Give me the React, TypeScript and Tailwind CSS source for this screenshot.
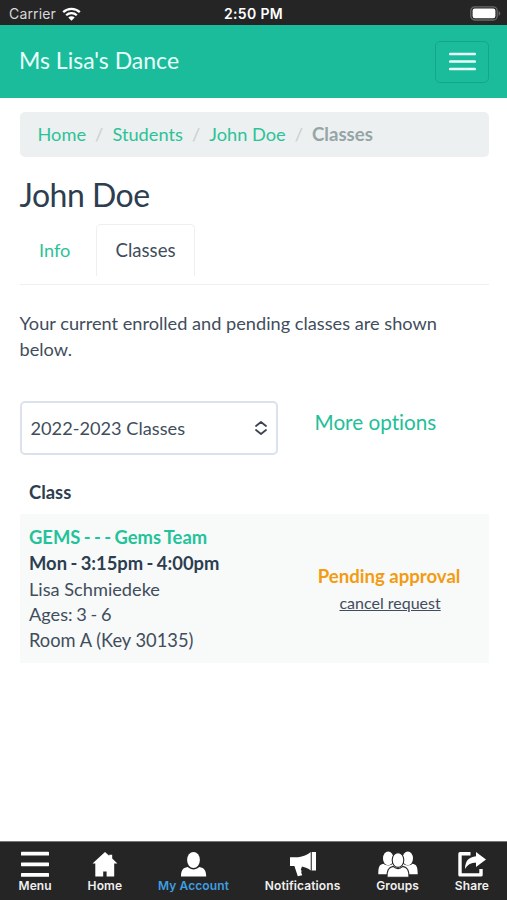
import type { ReactNode } from "react";

const crumbs = ["Home", "Students", "John Doe"];

export default function App() {
  return (
    <main className="flex h-[900px] w-[507px] flex-col overflow-hidden bg-white font-['Lato',sans-serif] text-[18.2px] leading-[25.7px] text-[#414d5c] [font-variant-ligatures:none]">
      <StatusBar />
      <Header />
      <div className="flex flex-1 flex-col pl-[19.5px] pr-[18.5px]">
        <nav className="mt-[14px] flex h-[45px] shrink-0 items-center rounded-[5px] bg-[#ecf0f1] pl-[18px] pt-px">
          {crumbs.map((crumb) => (
            <span key={crumb} className="flex">
              <a className="text-[#2cc297]">{crumb}</a>
              <span className="w-[26.5px] text-center text-[#c9cfd2]">/</span>
            </span>
          ))}
          <span className="text-[18.6px] font-bold text-[#95a5a6]">
            Classes
          </span>
        </nav>

        <h1 className="mt-[18px] text-[32px] leading-[40px] tracking-[-0.5px] text-[#2c3e50]">
          John Doe
        </h1>

        <div className="mt-[9px] flex h-[61px] shrink-0 items-start border-b border-[#ecf0f1]">
          <a className="w-[76.5px] pl-[19.5px] pt-[14px] text-[#2cc297]">
            Info
          </a>
          <a className="h-[52px] w-[99px] rounded-t-[5px] border border-b-0 border-[#ecf0f1] pt-[13px] text-center text-[18.6px]">
            Classes
          </a>
        </div>

        <p className="mt-[26px] w-[440px]">
          Your current enrolled and pending classes are shown below.
        </p>

        <div className="mt-[39px] flex shrink-0">
          <button className="flex h-[54px] w-[258px] items-center justify-between rounded-[5px] border-2 border-[#dce2ec] pl-[9px] pr-[8px]">
            2022-2023 Classes
            <svg
              width="14"
              height="16"
              viewBox="0 0 14 16"
              fill="none"
              stroke="#3a4451"
              strokeWidth="1.8"
              strokeLinecap="round"
              strokeLinejoin="round"
            >
              <path d="M2 6 7 2l5 4M2 10l5 4 5-4" />
            </svg>
          </button>
          <a className="ml-[37px] mt-[9px] text-[20.7px] text-[#22bf98]">
            More options
          </a>
        </div>

        <h2 className="mb-[8px] ml-[9.5px] mt-[25px] text-[18.4px] font-bold text-[#2c3e50]">
          Class
        </h2>
        <section className="flex h-[149px] shrink-0 items-center justify-between bg-[#f8f9f9] pl-[9.5px] pr-[28px]">
          <div className="pt-[2px]">
            <p className="text-[18.4px] font-bold text-[#22c39a] [word-spacing:-1.1px]">
              GEMS - - - Gems Team
            </p>
            <p className="text-[18.4px] font-bold text-[#2c3e50] [word-spacing:-1.1px]">
              Mon - 3:15pm - 4:00pm
            </p>
            <p>Lisa Schmiedeke</p>
            <p className="[word-spacing:-1px]">Ages: 3 - 6</p>
            <p className="text-[18.3px]">Room A (Key 30135)</p>
          </div>
          <div className="pt-[2px] text-center">
            <p className="text-[18.6px] font-bold text-[#f39c12]">
              Pending approval
            </p>
            <p className="pl-[2px] text-[16px]">
              <a className="underline">cancel request</a>
            </p>
          </div>
        </section>
      </div>
      <TabBar />
    </main>
  );
}

function StatusBar() {
  return (
    <div className="grid h-[25px] shrink-0 grid-cols-3 items-center bg-[#252525] pl-[9px] pr-[6px] pt-[2px] font-['Inter',sans-serif] text-[14px] leading-4 text-white">
      <div className="flex items-center gap-[6px]">
        <span className="tracking-[0.15px] text-[#d8d8d8]">Carrier</span>
        <svg width="19" height="14" viewBox="0 0 19 14" fill="none">
          <path
            d="M1.2 5.2a12 12 0 0 1 16.6 0M4.2 8.3a7.6 7.6 0 0 1 10.6 0"
            stroke="#fff"
            strokeWidth="2.3"
          />
          <path d="M6.3 10.6a4.6 4.6 0 0 1 6.4 0L9.5 13.8z" fill="#fff" />
        </svg>
      </div>
      <span className="pr-[3px] text-center font-semibold tracking-[0.35px]">
        2:50 PM
      </span>
      <svg
        className="justify-self-end"
        width="31"
        height="15"
        viewBox="0 0 31 15"
      >
        <rect
          x="0.8"
          y="0.8"
          width="26.4"
          height="13.2"
          rx="4"
          fill="none"
          stroke="#69696b"
          strokeWidth="1.3"
        />
        <rect x="2.6" y="2.6" width="22.8" height="9.6" rx="2.2" fill="#fff" />
        <path d="M28.6 5c2.2.7 2.2 4.1 0 4.8z" fill="#69696b" />
      </svg>
    </div>
  );
}

function Header() {
  return (
    <header className="flex h-[73px] shrink-0 items-center justify-between bg-[#1abc9c] pl-[19px] pr-[18px]">
      <span className="pb-px text-[23px] text-[#eafffa]">Ms Lisa's Dance</span>
      <button className="flex h-[42px] w-[54px] items-center justify-center rounded-[5px] border border-[#17a589]">
        <svg width="27" height="19" viewBox="0 0 27 19" fill="none">
          <path
            d="M1.3 2h24.4M1.3 9.5h24.4M1.3 17h24.4"
            stroke="#e9fffb"
            strokeWidth="2.7"
            strokeLinecap="round"
          />
        </svg>
      </button>
    </header>
  );
}

function TabBar() {
  return (
    <nav className="flex h-[59px] shrink-0 justify-between border-t border-[#777] bg-[#252525] pl-[18.5px] pr-[18px] pt-[9px] text-white">
      <Tab label="Menu">
        <svg width="30" height="27" viewBox="0 0 30 27" fill="currentColor">
          <rect x="1" y="0.8" width="28" height="3.8" rx="0.6" />
          <rect x="1" y="11.4" width="28" height="3.8" rx="0.6" />
          <rect x="1" y="22" width="28" height="3.8" rx="0.6" />
        </svg>
      </Tab>
      <Tab label="Home">
        <svg width="26" height="27" viewBox="0 0 26 27" fill="currentColor">
          <path d="M13 1 .5 12.5h2.8v13.1h7.9v-5h3.4v5h7.6V12.5h3.2L20.2 7.5V3.8h-3v1z" />
        </svg>
      </Tab>
      <Tab label="My Account" active>
        <svg width="27" height="27" viewBox="0 0 27 27" fill="#fff">
          <ellipse cx="13.5" cy="9" rx="6.4" ry="8" />
          <path d="M1 25.6c0-6 1.5-8.7 6.7-9.6 3.5 3.2 8.1 3.2 11.6 0 5.2.9 6.9 3.6 6.9 9.6z" />
        </svg>
      </Tab>
      <Tab label="Notifications">
        <svg width="28" height="27" viewBox="0 0 28 27" fill="currentColor">
          <path d="M1 6.2h8.2c4.8-.5 9-2.5 12.6-5.2v18.6c-2.8-2.1-5.4-3.3-8.8-4l-1.2 3.2.8 1-.4 1.7 1 2.8-4.4 1L5.4 15H1zM22.4 1h4.6v18.6h-4.6z" />
          <path d="M22.4 1v18.6" stroke="#252525" strokeWidth="0.7" />
        </svg>
      </Tab>
      <Tab label="Groups">
        <svg width="40" height="27" viewBox="0 0 40 27" fill="currentColor">
          <ellipse cx="10.2" cy="7.4" rx="5.2" ry="6.8" />
          <ellipse cx="29.8" cy="7.4" rx="5.2" ry="6.8" />
          <path d="M.3 23.2c0-6.8.9-9.6 5-10.4 3 2.3 7 2.3 9.6 0h10.2c2.6 2.3 6.6 2.3 9.6 0 4.1.8 5 3.6 5 10.4z" />
          <g stroke="#252525" strokeWidth="1.1">
            <path d="M9 26.2c0-7.2 1.5-10 6.2-10.8 2.9 2.6 6.7 2.6 9.6 0 4.7.8 6.2 3.6 6.2 10.8z" />
            <ellipse cx="20" cy="9" rx="5.8" ry="7.4" />
          </g>
        </svg>
      </Tab>
      <Tab label="Share">
        <svg width="30" height="27" viewBox="0 0 30 27" fill="currentColor">
          <path
            d="M13.5 2.7H3v21.2h21V18"
            fill="none"
            stroke="currentColor"
            strokeWidth="3.4"
            strokeLinejoin="round"
          />
          <path d="M19 1v4.3C11.8 6 8.2 10 8 18c2.8-4.8 6.2-6.3 11-6.3V16l10-7.6z" />
        </svg>
      </Tab>
    </nav>
  );
}

function Tab({
  label,
  active,
  children,
}: {
  label: string;
  active?: boolean;
  children: ReactNode;
}) {
  return (
    <a className="flex flex-col items-center">
      {children}
      <span
        className={`font-['Inter',sans-serif] text-[12px] font-semibold leading-4 tracking-[0.1px] ${active ? "text-[#3f9fe0]" : "text-[#f0f0f0]"}`}
      >
        {label}
      </span>
    </a>
  );
}
